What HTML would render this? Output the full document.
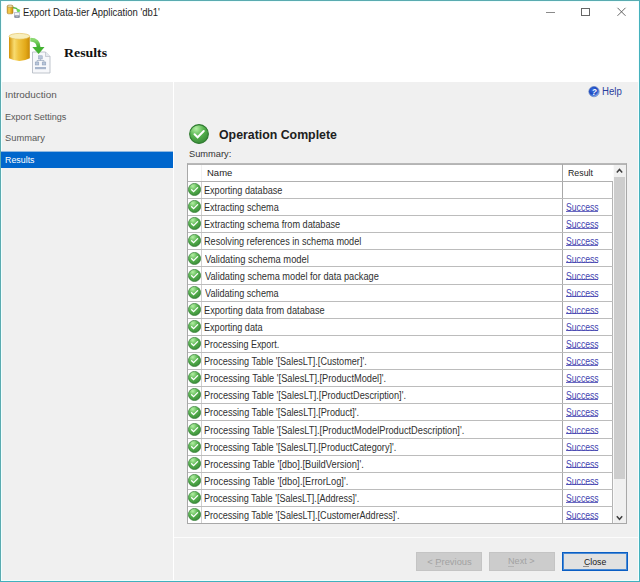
<!DOCTYPE html>
<html><head><meta charset="utf-8">
<style>
*{margin:0;padding:0;box-sizing:border-box}
html,body{width:640px;height:582px;overflow:hidden;background:#f0f0f0}
body{position:relative;font-family:"Liberation Sans",sans-serif;color:#1a1a1a}
.a{position:absolute}
.tx{position:absolute;white-space:pre;transform-origin:0 0}
.hl{position:absolute;height:1px;background:#bcbcbc}
.ok{position:absolute;width:13px;height:13px}
.btn{position:absolute;top:552px;width:66px;height:19px;background:#cccccc;border:1px solid #c4c4c4}
</style></head><body>
<svg width="0" height="0" style="position:absolute">
<defs>
<radialGradient id="gg" cx="35%" cy="22%" r="80%">
<stop offset="0" stop-color="#b4f0a4"/><stop offset="0.5" stop-color="#58b450"/><stop offset="1" stop-color="#3a8c38"/>
</radialGradient>

<linearGradient id="cyl" x1="0" x2="1" y1="0" y2="0">
<stop offset="0" stop-color="#d89a10"/><stop offset="0.3" stop-color="#f6d25a"/><stop offset="0.6" stop-color="#e9b42a"/><stop offset="1" stop-color="#c98a08"/>
</linearGradient>
</defs>
</svg>
<!-- window borders -->
<div class="a" style="left:0;top:0;width:640px;height:582px;border:1px solid #5aabb0;border-bottom-color:#40b0bd;border-right-color:#45b1bd"></div>
<!-- title bar + header white -->
<div class="a" style="left:1px;top:1px;width:638px;height:81px;background:#fff"></div>
<!-- panes -->
<div class="a" style="left:1px;top:82px;width:172px;height:498px;background:#f0f0f0"></div>
<div class="a" style="left:173px;top:82px;width:1px;height:498px;background:#ffffff"></div>
<div class="a" style="left:174px;top:82px;width:465px;height:499px;background:#f0f0f0"></div>
<!-- inner highlight lines -->
<div class="a" style="left:1px;top:1px;width:1px;height:580px;background:#f0ffff"></div>
<div class="a" style="left:638px;top:1px;width:1px;height:580px;background:#f4ffff"></div>
<div class="a" style="left:1px;top:580px;width:638px;height:1px;background:#f0ffff"></div>
<div class="a" style="left:1px;top:1px;width:638px;height:1px;background:#f0ffff"></div>

<!-- title icon -->
<svg class="a" style="left:6px;top:4px" width="15" height="15" viewBox="0 0 15 15">
<rect x="1.2" y="1.3" width="5.8" height="8.5" rx="1.2" fill="url(#cyl)" stroke="#a88030" stroke-width="0.6"/>
<ellipse cx="4.1" cy="2.2" rx="2.8" ry="1.1" fill="#f4e6b0" stroke="#9a8050" stroke-width="0.5"/>
<path d="M7 3.8 Q10.5 3.4 12 6" fill="none" stroke="#58b848" stroke-width="1.4"/>
<circle cx="12.4" cy="6.6" r="1.7" fill="#6cd858"/>
<rect x="8.7" y="8.4" width="4.6" height="5" fill="#f2f4f8" stroke="#9aa4b8" stroke-width="0.6"/>
<rect x="8.6" y="11.5" width="4.8" height="2" fill="#646c82"/>
<rect x="9.4" y="12.1" width="3.2" height="0.6" fill="#d8dde6"/>
</svg>
<!-- window controls -->
<div class="a" style="left:546px;top:11.5px;width:9px;height:1.3px;background:#8a8a8a"></div>
<div class="a" style="left:581px;top:8px;width:9px;height:8px;border:1px solid #666"></div>
<svg class="a" style="left:616px;top:6px" width="11" height="11" viewBox="0 0 11 11"><path d="M1.5 1.8 L9.5 9.8 M9.5 1.8 L1.5 9.8" stroke="#555" stroke-width="0.9"/></svg>

<!-- big header icon -->
<svg class="a" style="left:6px;top:30px" width="48" height="46" viewBox="0 0 48 46">
<defs>
<linearGradient id="cyl2" x1="0" x2="1" y1="0" y2="0">
<stop offset="0" stop-color="#d49208"/><stop offset="0.25" stop-color="#f8dc70"/><stop offset="0.45" stop-color="#f0c440"/><stop offset="0.8" stop-color="#e2a818"/><stop offset="1" stop-color="#c88a08"/>
</linearGradient>
<linearGradient id="arr" x1="0" x2="0" y1="0" y2="1">
<stop offset="0" stop-color="#8ad870"/><stop offset="1" stop-color="#3cae2c"/>
</linearGradient>
</defs>
<path d="M3 6.5 L3 28.2 Q13.4 33.6 23.8 28.2 L23.8 6.5 Z" fill="url(#cyl2)"/>
<ellipse cx="13.4" cy="6.3" rx="10.4" ry="2.9" fill="#f8eebc" stroke="#e2bc50" stroke-width="0.6"/>
<path d="M26.5 22 L39.5 22 L44 26.5 L44 43 L26.5 43 Z" fill="#f7f8fb" stroke="#b0b6c0" stroke-width="0.8"/>
<path d="M39.5 22 L39.5 26.5 L44 26.5" fill="#e4e8ee" stroke="#b0b6c0" stroke-width="0.6"/>
<rect x="32.6" y="25.8" width="3.6" height="3.2" fill="#b8c6da" stroke="#8a9ab4" stroke-width="0.5"/>
<path d="M34.4 29 L34.4 30.5 M31 30.5 L38 30.5 M31 30.5 L31 32 M38 30.5 L38 32" stroke="#8a9ab4" stroke-width="0.6" fill="none"/>
<rect x="29.2" y="32" width="3.6" height="3" fill="#b8c6da" stroke="#8a9ab4" stroke-width="0.5"/>
<rect x="36.2" y="32" width="3.6" height="3" fill="#b8c6da" stroke="#8a9ab4" stroke-width="0.5"/>
<rect x="29" y="37" width="11" height="2.2" fill="#a8b6cc"/>
<path d="M24.3 9.6 Q32.6 9.6 32.6 17.5" fill="none" stroke="url(#arr)" stroke-width="3.8"/>
<path d="M26.3 17 L38.5 17 L32.6 24 Z" fill="#44b232"/>
</svg>
<!-- nav selection -->
<div class="a" style="left:1px;top:151px;width:172px;height:1px;background:#90b8e0"></div>
<div class="a" style="left:1px;top:152px;width:172px;height:16px;background:#0066cc"></div>

<!-- help icon -->
<svg class="a" style="left:587.5px;top:85.8px" width="12" height="12" viewBox="0 0 12 12">
<defs><radialGradient id="hg" cx="40%" cy="35%" r="65%"><stop offset="0" stop-color="#3a70e0"/><stop offset="0.6" stop-color="#1c48c0"/><stop offset="0.85" stop-color="#5a88e0"/><stop offset="1" stop-color="#9ab8f0"/></radialGradient></defs>
<circle cx="6" cy="5.6" r="5.2" fill="url(#hg)" stroke="#5a78b8" stroke-width="0.6"/>
<text x="6.2" y="8.8" font-family="Liberation Sans" font-weight="bold" font-style="italic" font-size="8.2" fill="#fff" text-anchor="middle">?</text>
</svg>
<!-- operation complete icon -->
<svg class="a" style="left:189px;top:124px" width="20" height="20" viewBox="0 0 13 13"><circle cx="6.5" cy="6.5" r="6.1" fill="url(#gg)" stroke="#2f7a30" stroke-width="0.7"/><path d="M3.6 6.7 L5.6 8.6 L9.6 4.6" fill="none" stroke="#fff" stroke-width="1.3" stroke-linecap="round"/></svg>

<!-- table -->
<div class="a" style="left:187px;top:163px;width:440px;height:361px;border:1px solid #a8a8a8;border-top-color:#b8b8b8;background:#fff"></div>
<div class="a" style="left:188px;top:164px;width:438px;height:1px;background:#b4b4b4"></div>
<div class="a" style="left:201px;top:181px;width:1px;height:342px;background:#d0d0d0"></div>
<div class="a" style="left:201px;top:165px;width:1px;height:16px;background:#f0f0f0"></div>
<div class="a" style="left:562px;top:164px;width:1px;height:359px;background:#a8a8a8"></div>
<div class="a" style="left:612px;top:181px;width:1px;height:342px;background:#b4b4b4"></div>
<!-- scrollbar -->
<div class="a" style="left:613px;top:165px;width:13px;height:358px;background:#f0f0f0;border-left:1px solid #fafafa"></div>
<div class="a" style="left:614px;top:177px;width:11px;height:302px;background:#cdcdcd"></div>
<svg class="a" style="left:615px;top:167px" width="9" height="7" viewBox="0 0 9 7"><path d="M1.8 5.4 L4.5 2.4 L7.2 5.4" fill="none" stroke="#404040" stroke-width="1.5"/></svg>
<svg class="a" style="left:615px;top:514px" width="9" height="7" viewBox="0 0 9 7"><path d="M1.8 2.3 L4.5 5.3 L7.2 2.3" fill="none" stroke="#404040" stroke-width="1.5"/></svg>

<!-- bottom separator -->

<div class="a" style="left:174px;top:537px;width:464px;height:1px;background:#fcfcfc"></div>
<div class="btn" style="left:416px;"></div>
<div class="btn" style="left:489px;"></div>
<div class="btn" style="left:562px;width:66px;background:#e1e1e1;border:1px solid #0a5ec4;box-shadow:inset 0 0 0 1px #4a8ad4"></div>
<div class="a" style="left:435px;top:566px;width:6px;height:1px;background:#b4b4b4"></div>
<div class="a" style="left:508px;top:566px;width:6px;height:1px;background:#b4b4b4"></div>
<div class="a" style="left:583px;top:566px;width:6px;height:1px;background:#8c8c8c"></div>
<div class="hl" style="left:188px;top:198px;width:425px"></div>
<div class="hl" style="left:188px;top:215px;width:425px"></div>
<div class="hl" style="left:188px;top:232px;width:425px"></div>
<div class="hl" style="left:188px;top:249px;width:425px"></div>
<div class="hl" style="left:188px;top:266px;width:425px"></div>
<div class="hl" style="left:188px;top:284px;width:425px"></div>
<div class="hl" style="left:188px;top:301px;width:425px"></div>
<div class="hl" style="left:188px;top:318px;width:425px"></div>
<div class="hl" style="left:188px;top:335px;width:425px"></div>
<div class="hl" style="left:188px;top:352px;width:425px"></div>
<div class="hl" style="left:188px;top:369px;width:425px"></div>
<div class="hl" style="left:188px;top:386px;width:425px"></div>
<div class="hl" style="left:188px;top:403px;width:425px"></div>
<div class="hl" style="left:188px;top:420px;width:425px"></div>
<div class="hl" style="left:188px;top:438px;width:425px"></div>
<div class="hl" style="left:188px;top:455px;width:425px"></div>
<div class="hl" style="left:188px;top:472px;width:425px"></div>
<div class="hl" style="left:188px;top:489px;width:425px"></div>
<div class="hl" style="left:188px;top:506px;width:425px"></div>
<div class="hl" style="left:188px;top:181px;width:425px;background:#b0b0b0"></div>
<svg class="ok" style="left:188px;top:183px" viewBox="0 0 13 13"><circle cx="6.5" cy="6.5" r="6.1" fill="url(#gg)" stroke="#2f7a30" stroke-width="0.7"/><path d="M3.6 6.7 L5.6 8.6 L9.6 4.6" fill="none" stroke="#fff" stroke-width="1.3" stroke-linecap="round"/></svg>
<svg class="ok" style="left:188px;top:200px" viewBox="0 0 13 13"><circle cx="6.5" cy="6.5" r="6.1" fill="url(#gg)" stroke="#2f7a30" stroke-width="0.7"/><path d="M3.6 6.7 L5.6 8.6 L9.6 4.6" fill="none" stroke="#fff" stroke-width="1.3" stroke-linecap="round"/></svg>
<svg class="ok" style="left:188px;top:217px" viewBox="0 0 13 13"><circle cx="6.5" cy="6.5" r="6.1" fill="url(#gg)" stroke="#2f7a30" stroke-width="0.7"/><path d="M3.6 6.7 L5.6 8.6 L9.6 4.6" fill="none" stroke="#fff" stroke-width="1.3" stroke-linecap="round"/></svg>
<svg class="ok" style="left:188px;top:234px" viewBox="0 0 13 13"><circle cx="6.5" cy="6.5" r="6.1" fill="url(#gg)" stroke="#2f7a30" stroke-width="0.7"/><path d="M3.6 6.7 L5.6 8.6 L9.6 4.6" fill="none" stroke="#fff" stroke-width="1.3" stroke-linecap="round"/></svg>
<svg class="ok" style="left:188px;top:252px" viewBox="0 0 13 13"><circle cx="6.5" cy="6.5" r="6.1" fill="url(#gg)" stroke="#2f7a30" stroke-width="0.7"/><path d="M3.6 6.7 L5.6 8.6 L9.6 4.6" fill="none" stroke="#fff" stroke-width="1.3" stroke-linecap="round"/></svg>
<svg class="ok" style="left:188px;top:269px" viewBox="0 0 13 13"><circle cx="6.5" cy="6.5" r="6.1" fill="url(#gg)" stroke="#2f7a30" stroke-width="0.7"/><path d="M3.6 6.7 L5.6 8.6 L9.6 4.6" fill="none" stroke="#fff" stroke-width="1.3" stroke-linecap="round"/></svg>
<svg class="ok" style="left:188px;top:286px" viewBox="0 0 13 13"><circle cx="6.5" cy="6.5" r="6.1" fill="url(#gg)" stroke="#2f7a30" stroke-width="0.7"/><path d="M3.6 6.7 L5.6 8.6 L9.6 4.6" fill="none" stroke="#fff" stroke-width="1.3" stroke-linecap="round"/></svg>
<svg class="ok" style="left:188px;top:303px" viewBox="0 0 13 13"><circle cx="6.5" cy="6.5" r="6.1" fill="url(#gg)" stroke="#2f7a30" stroke-width="0.7"/><path d="M3.6 6.7 L5.6 8.6 L9.6 4.6" fill="none" stroke="#fff" stroke-width="1.3" stroke-linecap="round"/></svg>
<svg class="ok" style="left:188px;top:320px" viewBox="0 0 13 13"><circle cx="6.5" cy="6.5" r="6.1" fill="url(#gg)" stroke="#2f7a30" stroke-width="0.7"/><path d="M3.6 6.7 L5.6 8.6 L9.6 4.6" fill="none" stroke="#fff" stroke-width="1.3" stroke-linecap="round"/></svg>
<svg class="ok" style="left:188px;top:337px" viewBox="0 0 13 13"><circle cx="6.5" cy="6.5" r="6.1" fill="url(#gg)" stroke="#2f7a30" stroke-width="0.7"/><path d="M3.6 6.7 L5.6 8.6 L9.6 4.6" fill="none" stroke="#fff" stroke-width="1.3" stroke-linecap="round"/></svg>
<svg class="ok" style="left:188px;top:354px" viewBox="0 0 13 13"><circle cx="6.5" cy="6.5" r="6.1" fill="url(#gg)" stroke="#2f7a30" stroke-width="0.7"/><path d="M3.6 6.7 L5.6 8.6 L9.6 4.6" fill="none" stroke="#fff" stroke-width="1.3" stroke-linecap="round"/></svg>
<svg class="ok" style="left:188px;top:371px" viewBox="0 0 13 13"><circle cx="6.5" cy="6.5" r="6.1" fill="url(#gg)" stroke="#2f7a30" stroke-width="0.7"/><path d="M3.6 6.7 L5.6 8.6 L9.6 4.6" fill="none" stroke="#fff" stroke-width="1.3" stroke-linecap="round"/></svg>
<svg class="ok" style="left:188px;top:388px" viewBox="0 0 13 13"><circle cx="6.5" cy="6.5" r="6.1" fill="url(#gg)" stroke="#2f7a30" stroke-width="0.7"/><path d="M3.6 6.7 L5.6 8.6 L9.6 4.6" fill="none" stroke="#fff" stroke-width="1.3" stroke-linecap="round"/></svg>
<svg class="ok" style="left:188px;top:406px" viewBox="0 0 13 13"><circle cx="6.5" cy="6.5" r="6.1" fill="url(#gg)" stroke="#2f7a30" stroke-width="0.7"/><path d="M3.6 6.7 L5.6 8.6 L9.6 4.6" fill="none" stroke="#fff" stroke-width="1.3" stroke-linecap="round"/></svg>
<svg class="ok" style="left:188px;top:423px" viewBox="0 0 13 13"><circle cx="6.5" cy="6.5" r="6.1" fill="url(#gg)" stroke="#2f7a30" stroke-width="0.7"/><path d="M3.6 6.7 L5.6 8.6 L9.6 4.6" fill="none" stroke="#fff" stroke-width="1.3" stroke-linecap="round"/></svg>
<svg class="ok" style="left:188px;top:440px" viewBox="0 0 13 13"><circle cx="6.5" cy="6.5" r="6.1" fill="url(#gg)" stroke="#2f7a30" stroke-width="0.7"/><path d="M3.6 6.7 L5.6 8.6 L9.6 4.6" fill="none" stroke="#fff" stroke-width="1.3" stroke-linecap="round"/></svg>
<svg class="ok" style="left:188px;top:457px" viewBox="0 0 13 13"><circle cx="6.5" cy="6.5" r="6.1" fill="url(#gg)" stroke="#2f7a30" stroke-width="0.7"/><path d="M3.6 6.7 L5.6 8.6 L9.6 4.6" fill="none" stroke="#fff" stroke-width="1.3" stroke-linecap="round"/></svg>
<svg class="ok" style="left:188px;top:474px" viewBox="0 0 13 13"><circle cx="6.5" cy="6.5" r="6.1" fill="url(#gg)" stroke="#2f7a30" stroke-width="0.7"/><path d="M3.6 6.7 L5.6 8.6 L9.6 4.6" fill="none" stroke="#fff" stroke-width="1.3" stroke-linecap="round"/></svg>
<svg class="ok" style="left:188px;top:491px" viewBox="0 0 13 13"><circle cx="6.5" cy="6.5" r="6.1" fill="url(#gg)" stroke="#2f7a30" stroke-width="0.7"/><path d="M3.6 6.7 L5.6 8.6 L9.6 4.6" fill="none" stroke="#fff" stroke-width="1.3" stroke-linecap="round"/></svg>
<svg class="ok" style="left:188px;top:508px" viewBox="0 0 13 13"><circle cx="6.5" cy="6.5" r="6.1" fill="url(#gg)" stroke="#2f7a30" stroke-width="0.7"/><path d="M3.6 6.7 L5.6 8.6 L9.6 4.6" fill="none" stroke="#fff" stroke-width="1.3" stroke-linecap="round"/></svg>
<div class="a" style="left:566px;top:211px;width:32px;height:1px;background:#6a6ac0"></div>
<div class="a" style="left:566px;top:228px;width:32px;height:1px;background:#6a6ac0"></div>
<div class="a" style="left:566px;top:245px;width:32px;height:1px;background:#6a6ac0"></div>
<div class="a" style="left:566px;top:262px;width:32px;height:1px;background:#6a6ac0"></div>
<div class="a" style="left:566px;top:279px;width:32px;height:1px;background:#6a6ac0"></div>
<div class="a" style="left:566px;top:296px;width:32px;height:1px;background:#6a6ac0"></div>
<div class="a" style="left:566px;top:313px;width:32px;height:1px;background:#6a6ac0"></div>
<div class="a" style="left:566px;top:330px;width:32px;height:1px;background:#6a6ac0"></div>
<div class="a" style="left:566px;top:348px;width:32px;height:1px;background:#6a6ac0"></div>
<div class="a" style="left:566px;top:365px;width:32px;height:1px;background:#6a6ac0"></div>
<div class="a" style="left:566px;top:382px;width:32px;height:1px;background:#6a6ac0"></div>
<div class="a" style="left:566px;top:399px;width:32px;height:1px;background:#6a6ac0"></div>
<div class="a" style="left:566px;top:416px;width:32px;height:1px;background:#6a6ac0"></div>
<div class="a" style="left:566px;top:433px;width:32px;height:1px;background:#6a6ac0"></div>
<div class="a" style="left:566px;top:450px;width:32px;height:1px;background:#6a6ac0"></div>
<div class="a" style="left:566px;top:467px;width:32px;height:1px;background:#6a6ac0"></div>
<div class="a" style="left:566px;top:484px;width:32px;height:1px;background:#6a6ac0"></div>
<div class="a" style="left:566px;top:502px;width:32px;height:1px;background:#6a6ac0"></div>
<div class="a" style="left:566px;top:519px;width:32px;height:1px;background:#6a6ac0"></div>
<div class="tx" style="left:23.35px;top:6.00px;font:10px 'Liberation Sans';line-height:14px;color:#1e1e1e;transform:scaleX(0.9476);">Export Data-tier Application 'db1'</div>
<div class="tx" style="left:64.00px;top:45.90px;font:bold 13px 'Liberation Serif';line-height:14px;color:#111;transform:scaleX(1.0650);">Results</div>
<div class="tx" style="left:5.37px;top:87.80px;font:9.6px 'Liberation Sans';line-height:14px;color:#585858;transform:scaleX(1.0327);">Introduction</div>
<div class="tx" style="left:5.26px;top:110.00px;font:9.6px 'Liberation Sans';line-height:14px;color:#585858;transform:scaleX(0.9437);">Export Settings</div>
<div class="tx" style="left:5.23px;top:130.90px;font:9.6px 'Liberation Sans';line-height:14px;color:#585858;transform:scaleX(0.9700);">Summary</div>
<div class="tx" style="left:5.28px;top:153.10px;font:9.6px 'Liberation Sans';line-height:14px;color:#ffffff;transform:scaleX(0.9226);">Results</div>
<div class="tx" style="left:602.34px;top:85.20px;font:10px 'Liberation Sans';line-height:14px;color:#2a3e9e;transform:scaleX(0.9632);">Help</div>
<div class="tx" style="left:219.35px;top:128.00px;font:bold 12.4px 'Liberation Sans';line-height:14px;color:#202020;transform:scaleX(0.9958);">Operation Complete</div>
<div class="tx" style="left:188.93px;top:147.00px;font:9.6px 'Liberation Sans';line-height:14px;color:#333333;transform:scaleX(0.9667);">Summary:</div>
<div class="tx" style="left:207.06px;top:166.00px;font:9.1px 'Liberation Sans';line-height:14px;color:#222222;transform:scaleX(1.0435);">Name</div>
<div class="tx" style="left:568.33px;top:166.10px;font:9.1px 'Liberation Sans';line-height:14px;color:#222222;transform:scaleX(0.9680);">Result</div>
<div class="tx" style="left:427.20px;top:555.00px;font:9.4px 'Liberation Sans';line-height:14px;color:#a2a2a2;transform:scaleX(1.0000);">&lt; Previous</div>
<div class="tx" style="left:507.63px;top:554.00px;font:9.4px 'Liberation Sans';line-height:14px;color:#a2a2a2;transform:scaleX(0.9712);">Next &gt;</div>
<div class="tx" style="left:583.80px;top:554.70px;font:9.4px 'Liberation Sans';line-height:14px;color:#1a1a1a;transform:scaleX(0.9271);">Close</div>
<div class="tx" style="left:204.09px;top:184.10px;font:10px 'Liberation Sans';line-height:14px;color:#303030;transform:scaleX(0.9094);">Exporting database</div>
<div class="tx" style="left:204.09px;top:201.20px;font:10px 'Liberation Sans';line-height:14px;color:#303030;transform:scaleX(0.9086);">Extracting schema</div>
<div class="tx" style="left:565.99px;top:201.20px;font:10px 'Liberation Sans';line-height:14px;color:#4444b0;transform:scaleX(0.8639);">Success</div>
<div class="tx" style="left:204.09px;top:218.30px;font:10px 'Liberation Sans';line-height:14px;color:#303030;transform:scaleX(0.9142);">Extracting schema from database</div>
<div class="tx" style="left:565.99px;top:218.30px;font:10px 'Liberation Sans';line-height:14px;color:#4444b0;transform:scaleX(0.8639);">Success</div>
<div class="tx" style="left:204.09px;top:235.40px;font:10px 'Liberation Sans';line-height:14px;color:#303030;transform:scaleX(0.9129);">Resolving references in schema model</div>
<div class="tx" style="left:565.99px;top:235.40px;font:10px 'Liberation Sans';line-height:14px;color:#4444b0;transform:scaleX(0.8639);">Success</div>
<div class="tx" style="left:205.00px;top:252.50px;font:10px 'Liberation Sans';line-height:14px;color:#303030;transform:scaleX(0.9355);">Validating schema model</div>
<div class="tx" style="left:565.99px;top:252.50px;font:10px 'Liberation Sans';line-height:14px;color:#4444b0;transform:scaleX(0.8639);">Success</div>
<div class="tx" style="left:205.00px;top:269.60px;font:10px 'Liberation Sans';line-height:14px;color:#303030;transform:scaleX(0.9234);">Validating schema model for data package</div>
<div class="tx" style="left:565.99px;top:269.60px;font:10px 'Liberation Sans';line-height:14px;color:#4444b0;transform:scaleX(0.8639);">Success</div>
<div class="tx" style="left:205.00px;top:286.70px;font:10px 'Liberation Sans';line-height:14px;color:#303030;transform:scaleX(0.9086);">Validating schema</div>
<div class="tx" style="left:565.99px;top:286.70px;font:10px 'Liberation Sans';line-height:14px;color:#4444b0;transform:scaleX(0.8639);">Success</div>
<div class="tx" style="left:204.08px;top:303.80px;font:10px 'Liberation Sans';line-height:14px;color:#303030;transform:scaleX(0.9200);">Exporting data from database</div>
<div class="tx" style="left:565.99px;top:303.80px;font:10px 'Liberation Sans';line-height:14px;color:#4444b0;transform:scaleX(0.8639);">Success</div>
<div class="tx" style="left:204.09px;top:320.90px;font:10px 'Liberation Sans';line-height:14px;color:#303030;transform:scaleX(0.9078);">Exporting data</div>
<div class="tx" style="left:565.99px;top:320.90px;font:10px 'Liberation Sans';line-height:14px;color:#4444b0;transform:scaleX(0.8639);">Success</div>
<div class="tx" style="left:204.10px;top:338.00px;font:10px 'Liberation Sans';line-height:14px;color:#303030;transform:scaleX(0.8976);">Processing Export.</div>
<div class="tx" style="left:565.99px;top:338.00px;font:10px 'Liberation Sans';line-height:14px;color:#4444b0;transform:scaleX(0.8639);">Success</div>
<div class="tx" style="left:204.09px;top:355.10px;font:10px 'Liberation Sans';line-height:14px;color:#303030;transform:scaleX(0.9113);">Processing Table '[SalesLT].[Customer]'.</div>
<div class="tx" style="left:565.99px;top:355.10px;font:10px 'Liberation Sans';line-height:14px;color:#4444b0;transform:scaleX(0.8639);">Success</div>
<div class="tx" style="left:204.08px;top:372.20px;font:10px 'Liberation Sans';line-height:14px;color:#303030;transform:scaleX(0.9246);">Processing Table '[SalesLT].[ProductModel]'.</div>
<div class="tx" style="left:565.99px;top:372.20px;font:10px 'Liberation Sans';line-height:14px;color:#4444b0;transform:scaleX(0.8639);">Success</div>
<div class="tx" style="left:204.08px;top:389.30px;font:10px 'Liberation Sans';line-height:14px;color:#303030;transform:scaleX(0.9193);">Processing Table '[SalesLT].[ProductDescription]'.</div>
<div class="tx" style="left:565.99px;top:389.30px;font:10px 'Liberation Sans';line-height:14px;color:#4444b0;transform:scaleX(0.8639);">Success</div>
<div class="tx" style="left:204.09px;top:406.40px;font:10px 'Liberation Sans';line-height:14px;color:#303030;transform:scaleX(0.9143);">Processing Table '[SalesLT].[Product]'.</div>
<div class="tx" style="left:565.99px;top:406.40px;font:10px 'Liberation Sans';line-height:14px;color:#4444b0;transform:scaleX(0.8639);">Success</div>
<div class="tx" style="left:204.07px;top:423.50px;font:10px 'Liberation Sans';line-height:14px;color:#303030;transform:scaleX(0.9250);">Processing Table '[SalesLT].[ProductModelProductDescription]'.</div>
<div class="tx" style="left:565.99px;top:423.50px;font:10px 'Liberation Sans';line-height:14px;color:#4444b0;transform:scaleX(0.8639);">Success</div>
<div class="tx" style="left:204.09px;top:440.60px;font:10px 'Liberation Sans';line-height:14px;color:#303030;transform:scaleX(0.9148);">Processing Table '[SalesLT].[ProductCategory]'.</div>
<div class="tx" style="left:565.99px;top:440.60px;font:10px 'Liberation Sans';line-height:14px;color:#4444b0;transform:scaleX(0.8639);">Success</div>
<div class="tx" style="left:204.07px;top:457.70px;font:10px 'Liberation Sans';line-height:14px;color:#303030;transform:scaleX(0.9318);">Processing Table '[dbo].[BuildVersion]'.</div>
<div class="tx" style="left:565.99px;top:457.70px;font:10px 'Liberation Sans';line-height:14px;color:#4444b0;transform:scaleX(0.8639);">Success</div>
<div class="tx" style="left:204.07px;top:474.80px;font:10px 'Liberation Sans';line-height:14px;color:#303030;transform:scaleX(0.9320);">Processing Table '[dbo].[ErrorLog]'.</div>
<div class="tx" style="left:565.99px;top:474.80px;font:10px 'Liberation Sans';line-height:14px;color:#4444b0;transform:scaleX(0.8639);">Success</div>
<div class="tx" style="left:204.10px;top:491.90px;font:10px 'Liberation Sans';line-height:14px;color:#303030;transform:scaleX(0.9035);">Processing Table '[SalesLT].[Address]'.</div>
<div class="tx" style="left:565.99px;top:491.90px;font:10px 'Liberation Sans';line-height:14px;color:#4444b0;transform:scaleX(0.8639);">Success</div>
<div class="tx" style="left:204.09px;top:509.00px;font:10px 'Liberation Sans';line-height:14px;color:#303030;transform:scaleX(0.9089);">Processing Table '[SalesLT].[CustomerAddress]'.</div>
<div class="tx" style="left:565.99px;top:509.00px;font:10px 'Liberation Sans';line-height:14px;color:#4444b0;transform:scaleX(0.8639);">Success</div>
</body></html>
